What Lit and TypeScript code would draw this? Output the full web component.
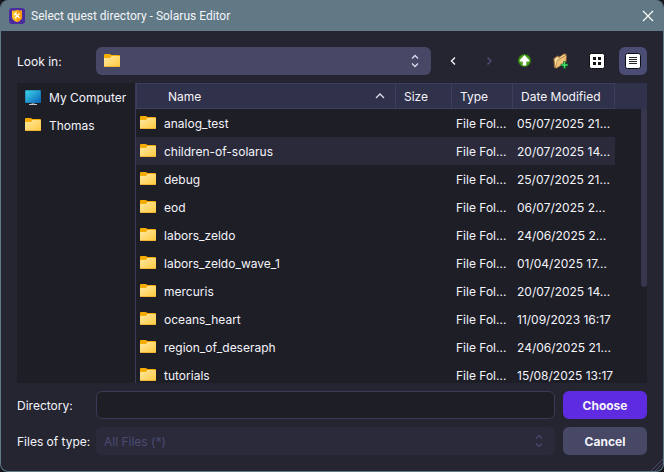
import { LitElement, html, css, svg, nothing } from "lit";
import { customElement, state } from "lit/decorators.js";
import { classMap } from "lit/directives/class-map.js";

const folder = html`<svg class="ic" viewBox="0 0 16 16" aria-hidden="true">
  <defs>
    <linearGradient id="f" x1="0" y1="0" x2="1" y2="1">
      <stop offset="0" stop-color="#ffe9a6" />
      <stop offset="1" stop-color="#ffc93c" />
    </linearGradient>
  </defs>
  <path d="M0 2Q0 1 1 1H5.6Q6.2 1 6.600 1.400L7.600 2H15Q16 2 16 3V9H0Z" fill="#f5ad05" />
  <path d="M0 5H6L7.600 3H15Q16 3 16 4V13Q16 14 15 14H1Q0 14 0 13Z" fill="url(#f)" />
  <path d="M.4 13.500H15.600" stroke="#eeb02c" stroke-width=".8" />
</svg>`;

const computer = html`<svg class="ic" viewBox="0 0 16 16" aria-hidden="true">
  <defs>
    <linearGradient id="m" x1="0" y1="0" x2="1" y2="1">
      <stop offset="0" stop-color="#3ed6e6" />
      <stop offset="1" stop-color="#0a64bd" />
    </linearGradient>
  </defs>
  <path d="M6.500 13h3v2h-3z" fill="#7e8b96" />
  <path d="M4 15h8v1H4z" fill="#c3ccd4" />
  <rect y="1" width="16" height="13" rx="1" fill="#1b6f9f" />
  <rect x=".5" y="1.500" width="15" height="12" rx=".5" fill="url(#m)" />
</svg>`;

const updown = html`<svg class="ic updown" viewBox="0 0 16 16" aria-hidden="true">
  <path d="M5 5.500 8 2.500 11 5.500M5 10.500 8 13.500 11 10.500" />
</svg>`;

const shield = html`<svg class="ic" viewBox="0 0 16 16" aria-hidden="true">
  <rect width="16" height="16" rx="3" fill="#4a2c9e" />
  <path d="M3 2.500Q5.500 3 8 2 10.500 3 13 2.500V9Q12.500 12.500 8 14 3.500 12.500 3 9Z" fill="#ffc224" />
  <path d="M8 2Q10.500 3 13 2.500V9Q12.500 12.500 8 14Z" fill="#ff9d0a" />
  <path d="M6.500 6 10.500 10M10.500 5.500 6 10M5 7 7.500 4.500" stroke="#fff" stroke-width="1.200" />
</svg>`;

const tools = [
  { id: "back", label: "Back", icon: svg`<path class="line" d="M10 4.500 6.500 8 10 11.500" />` },
  { id: "forward", label: "Forward", icon: svg`<path class="line" d="M6.500 4.500 10 8 6.500 11.500" />` },
  {
    id: "up",
    label: "Parent Directory",
    icon: svg`<circle cx="7.500" cy="7.500" r="6.500" fill="#2f7d0c" />
      <circle cx="7.500" cy="7.500" r="5.500" fill="#4c9c1b" />
      <path d="M7.500 2 12.300 7.200V8.500H9.300V12.500H5.700V8.500H2.700V7.200Z" fill="#fff" />`,
  },
  {
    id: "new",
    label: "Create New Folder",
    icon: svg`<path d="M.5 5.500 4.500 2.500 6.500 3.500 11 .5 13.500 1V9L3.500 15.500 1 14.500Z" fill="#a8793c" />
      <path d="M1.500 6 4.500 4 6 5 11 1.500 12.500 2 4 7 2.500 13.500Z" fill="#f9e3ac" />
      <path d="M4.500 7.500 13.500 2.500 12 10 2.500 15Z" fill="#efc27a" />
      <path d="M10.500 8.500H12.500V11H15V13H12.500V15.500H10.500V13H8V11H10.500Z" fill="#3fe064" stroke="#0d5a27" stroke-width=".6" />`,
  },
  {
    id: "icons",
    label: "List View",
    icon: svg`<rect x=".5" y=".5" width="15" height="15" rx="2" fill="#fff" stroke="#0d0f14" />
      <path d="M4 4h3v3H4zM9 4h3v3H9zM4 9h3v3H4zM9 9h3v3H9z" fill="#111" />`,
  },
  {
    id: "details",
    label: "Detail View",
    icon: svg`<rect x=".5" y=".5" width="15" height="15" rx="2" fill="#fff" stroke="#0d0f14" />
      <path d="M4 4h8v1H4zM4 6h8v1H4zM4 8h8v1H4zM4 10h8v1H4z" fill="#222" />`,
  },
];

const entries = [
  ["analog_test", "05/07/2025 21..."],
  ["children-of-solarus", "20/07/2025 14..."],
  ["debug", "25/07/2025 21..."],
  ["eod", "06/07/2025 2..."],
  ["labors_zeldo", "24/06/2025 2..."],
  ["labors_zeldo_wave_1", "01/04/2025 17..."],
  ["mercuris", "20/07/2025 14..."],
  ["oceans_heart", "11/09/2023 16:17"],
  ["region_of_deseraph", "24/06/2025 21..."],
  ["tutorials", "15/08/2025 13:17"],
];

@customElement("app-root")
export class AppRoot extends LitElement {
  @state() private view = "details";
  @state() private current = "children-of-solarus";

  static styles = css`
    :host {
      display: block;
      background: #16161e;
      color: #f4f4fa;
      font: 12px/17px Inter, sans-serif;
    }
    * {
      box-sizing: border-box;
    }
    button,
    input,
    select {
      font: inherit;
      color: inherit;
      margin: 0;
      border: 0;
      outline: 0;
      border-radius: 6px;
      height: 28px;
    }
    button {
      background: none;
      padding: 0;
    }
    .window {
      position: relative;
      display: flex;
      flex-direction: column;
      min-height: 100vh;
      border: 1px solid #607985;
      border-top: 0;
      border-radius: 8px;
      overflow: hidden;
      background: #242531;
    }
    .titlebar {
      display: flex;
      align-items: center;
      gap: 6px;
      height: 31px;
      padding: 0 8px;
      background: #607985;
    }
    .title {
      flex: 1;
      margin: 0;
      font: 12px/16px Roboto, sans-serif;
    }
    .close {
      display: flex;
      align-items: center;
      height: 16px;
    }
    .ic {
      display: block;
      flex: none;
      width: 16px;
      height: 16px;
    }
    .body {
      flex: 1;
      display: flex;
      flex-direction: column;
      gap: 8px;
      padding: 16px;
    }
    .bar {
      display: grid;
      grid-template-columns: 71px 1fr auto;
      align-items: center;
      gap: 8px;
    }
    .combo {
      position: relative;
      display: flex;
    }
    .combo select {
      flex: 1;
      min-width: 0;
      appearance: none;
      padding: 0 32px 0 8px;
      background: #464866;
      opacity: 1;
    }
    .combo select:disabled {
      background: #2a2a3b;
      color: #4a4a72;
    }
    .combo .ic {
      position: absolute;
      top: 6px;
      left: 8px;
      pointer-events: none;
    }
    .combo .updown {
      left: auto;
      right: 8px;
      stroke: #dcdcec;
    }
    .updown {
      fill: none;
      stroke-width: 1.3;
    }
    .combo select:disabled ~ .updown {
      stroke: #4a4a72;
    }
    .tools {
      display: flex;
      gap: 8px;
    }
    .tool {
      display: grid;
      place-items: center;
      width: 28px;
    }
    .tool.on {
      background: #4b4d75;
    }
    .line {
      fill: none;
      stroke: #f4f4fa;
      stroke-width: 1.4;
    }
    .tool:disabled .line {
      stroke: #4f4f7c;
    }
    .panes {
      flex: 1;
      display: flex;
      height: 300px;
      background: #1e1e27;
    }
    .places {
      width: 118px;
      margin: 0;
      padding: 0;
      list-style: none;
    }
    .place {
      display: flex;
      align-items: center;
      gap: 8px;
      width: 100%;
      padding: 0 8px;
      white-space: nowrap;
    }
    .files {
      position: relative;
      flex: 1;
      height: 300px;
      overflow: hidden;
      border-left: 1px solid #3a3b58;
    }
    table {
      width: 100%;
      table-layout: fixed;
      border-collapse: separate;
      border-spacing: 0;
    }
    th,
    td {
      padding: 0 4px;
      text-align: left;
      font-weight: 400;
      white-space: nowrap;
    }
    th {
      height: 26px;
      padding: 0 8px;
      background: #30314a;
      border: solid #3d3e5c;
      border-width: 1px 1px 1px 0;
    }
    th:first-child {
      border-left-width: 1px;
      padding-left: 31px;
    }
    th:last-child {
      border-color: #30314a;
    }
    .size {
      width: 56px;
    }
    .type {
      width: 61px;
    }
    .date {
      width: 102px;
    }
    .rest {
      width: 32px;
    }
    .sort,
    .cell {
      display: flex;
      align-items: center;
      gap: 8px;
    }
    .sort {
      justify-content: space-between;
    }
    .sort .ic {
      fill: none;
      stroke: #dcdcec;
      stroke-width: 1.3;
    }
    td {
      height: 28px;
    }
    .current td:not(:last-child) {
      background: #2a2a3b;
    }
    .thumb {
      position: absolute;
      top: 25px;
      right: 0;
      width: 6px;
      height: 179px;
      border-radius: 3px;
      background: #36374d;
    }
    .form {
      grid-template-columns: 71px 1fr 84px;
    }
    .form label {
      white-space: nowrap;
    }
    .text {
      width: 100%;
      min-width: 0;
      padding: 0 8px;
      background: #1e1e27;
      border: 1px solid #3a3b58;
    }
    .push {
      font-weight: 700;
      background: #464866;
    }
    .primary {
      background: #5f2be0;
    }
    .grip {
      position: absolute;
      right: 0;
      bottom: 0;
      width: 12px;
      height: 12px;
      fill: none;
      stroke: #464866;
    }
  `;

  render() {
    return html`<main class="window">
      <header class="titlebar">
        ${shield}
        <h1 class="title">Select quest directory - Solarus Editor</h1>
        <button class="close" aria-label="Close">
          <svg class="ic" viewBox="0 0 16 16">
            <path d="M4 3 14 13M14 3 4 13" stroke="#fff" stroke-width="1.1" />
          </svg>
        </button>
      </header>
      <div class="body">
        <div class="bar">
          <label for="look">Look in:</label>
          <div class="combo">
            <select id="look"><option></option></select>
            ${folder}${updown}
          </div>
          <div class="tools">
            ${tools.map(
              (t) => html`<button
                class=${classMap({ tool: true, on: t.id === this.view })}
                aria-label=${t.label}
                ?disabled=${t.id === "forward"}
                @click=${() => {
                  if (t.id === "icons" || t.id === "details") this.view = t.id;
                }}
              >
                <svg class="ic" viewBox="0 0 16 16">${t.icon}</svg>
              </button>`,
            )}
          </div>
        </div>
        <div class="panes">
          <ul class="places">
            <li><button class="place">${computer}My Computer</button></li>
            <li><button class="place">${folder}Thomas</button></li>
          </ul>
          <div class="files">
            <table>
              <thead>
                <tr>
                  <th>
                    <span class="sort">Name
                      <svg class="ic" viewBox="0 0 16 16"><path d="M5 10 9 6 13 10" /></svg>
                    </span>
                  </th>
                  <th class="size">Size</th>
                  <th class="type">Type</th>
                  <th class="date">Date Modified</th>
                  <th class="rest"></th>
                </tr>
              </thead>
              <tbody>
                ${entries.map(
                  ([name, date]) => html`<tr
                    class=${name === this.current ? "current" : nothing}
                    @mouseenter=${() => (this.current = name)}
                  >
                    <td><span class="cell">${folder}${name}</span></td>
                    <td></td>
                    <td>File Fol...</td>
                    <td>${date}</td>
                    <td></td>
                  </tr>`,
                )}
              </tbody>
            </table>
            <div class="thumb"></div>
          </div>
        </div>
        <div class="bar form">
          <label for="dir">Directory:</label>
          <input class="text" id="dir" type="text" />
          <button class="push primary">Choose</button>
          <label for="kind">Files of type:</label>
          <div class="combo">
            <select id="kind" disabled><option>All Files (*)</option></select>
            ${updown}
          </div>
          <button class="push">Cancel</button>
        </div>
      </div>
      <svg class="grip" viewBox="0 0 12 12" aria-hidden="true">
        <path d="M0 12 12 0M4 12 12 4M8 12 12 8" />
      </svg>
    </main>`;
  }
}
